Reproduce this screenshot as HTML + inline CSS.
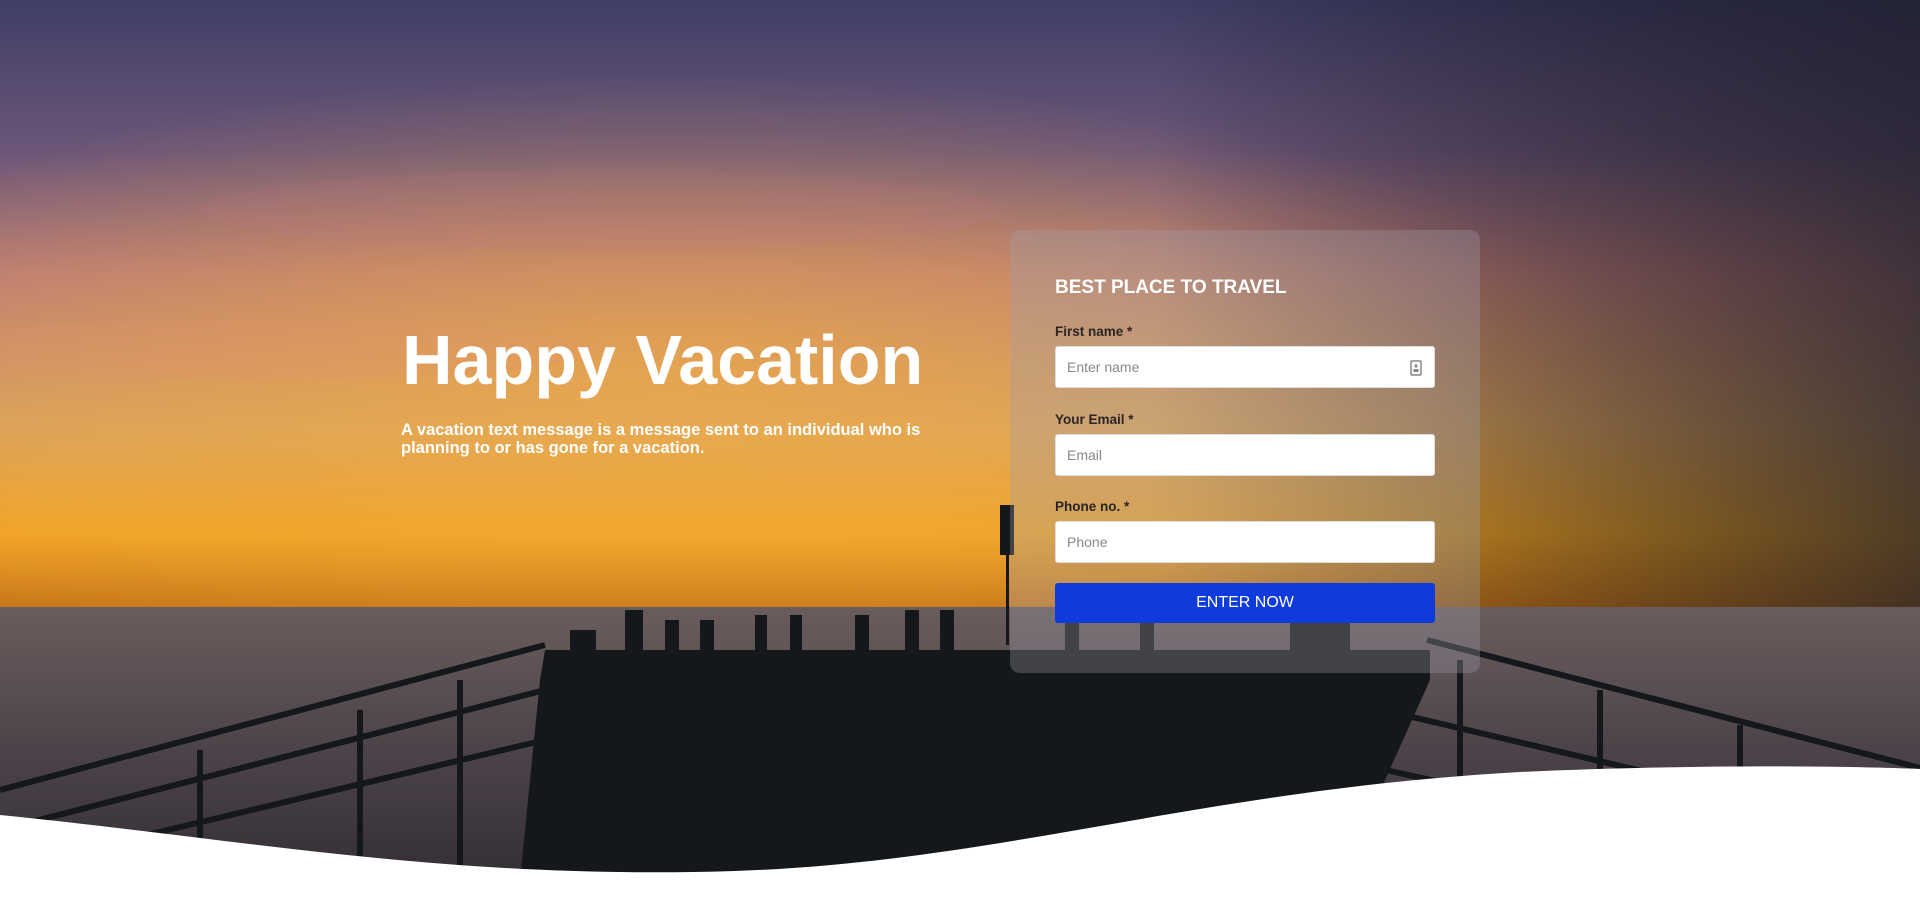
<!DOCTYPE html>
<html><head><meta charset="utf-8"><style>
*{margin:0;padding:0;box-sizing:border-box}
html,body{width:1920px;height:912px;overflow:hidden;background:#fff;font-family:"Liberation Sans",sans-serif}
.bg{position:absolute;left:0;top:0;width:1920px;height:912px}
.h1{position:absolute;left:402px;top:322px;color:#fff;font-size:70px;font-weight:bold;line-height:76px}
.sub{position:absolute;left:401px;top:421px;width:545px;color:#fff;font-size:16.5px;font-weight:bold;line-height:18px}
.card{position:absolute;left:1010px;top:230px;width:470px;height:443px;border-radius:10px;background:rgba(160,160,170,0.32)}
.title{position:absolute;left:1055px;top:277px;color:#fff;font-size:19px;font-weight:bold}
.lab{position:absolute;left:1055px;color:#2a2526;font-size:13.5px;font-weight:bold}
.inp{position:absolute;left:1055px;width:380px;height:42px;background:#fff;border:1px solid #ddd;border-radius:3px;color:#888;font-size:14px;padding:12px 0 0 11px}
.btn{position:absolute;left:1055px;top:583px;width:380px;height:40px;background:#0f3adc;border-radius:3px;color:#fff;font-size:16px;text-align:center;line-height:40px}
</style></head><body>
<svg class="bg" viewBox="0 0 1920 912" preserveAspectRatio="none">
<defs>
<linearGradient id="sky" x1="0" y1="0" x2="0" y2="1">
<stop offset="0" stop-color="#3f3e66"/><stop offset=".25" stop-color="#6b5678"/><stop offset=".45" stop-color="#b87a78"/><stop offset=".7" stop-color="#d8a060"/><stop offset=".88" stop-color="#f0a426"/><stop offset="1" stop-color="#c8781a"/>
</linearGradient>
<linearGradient id="dark" x1="0" y1="0" x2="1" y2="0">
<stop offset="0" stop-color="#000" stop-opacity="0"/><stop offset=".6" stop-color="#000" stop-opacity="0"/><stop offset="1" stop-color="#1a1a26" stop-opacity=".75"/>
</linearGradient>
<linearGradient id="sea" x1="0" y1="0" x2="0" y2="1">
<stop offset="0" stop-color="#6a5c5c"/><stop offset=".5" stop-color="#4a4248"/><stop offset="1" stop-color="#2e2a30"/>
</linearGradient>
<radialGradient id="glow" cx=".35" cy=".62" r=".5">
<stop offset="0" stop-color="#f5b040" stop-opacity=".6"/><stop offset="1" stop-color="#f5b040" stop-opacity="0"/>
</radialGradient>
</defs>
<rect width="1920" height="607" fill="url(#sky)"/>
<rect width="1920" height="607" fill="url(#glow)"/>
<rect width="1920" height="607" fill="url(#dark)"/>
<ellipse cx="250" cy="350" rx="350" ry="30" fill="#e89070" opacity=".2"/>
<ellipse cx="600" cy="210" rx="400" ry="40" fill="#c07888" opacity=".15"/>
<rect y="607" width="1920" height="305" fill="url(#sea)"/>
<g fill="#15181b">
<polygon points="545,650 1430,650 1430,680 1340,880 520,880 540,680"/>
<rect x="1000" y="505" width="14" height="50"/><rect x="1006" y="555" width="3" height="90"/>
<rect x="570" y="630" width="26" height="260"/><rect x="625" y="610" width="18" height="50"/>
<rect x="665" y="620" width="14" height="40"/><rect x="700" y="620" width="14" height="40"/>
<rect x="755" y="615" width="12" height="40"/><rect x="790" y="615" width="12" height="40"/>
<rect x="855" y="615" width="14" height="50"/><rect x="905" y="610" width="14" height="55"/>
<rect x="940" y="610" width="14" height="55"/><rect x="1065" y="620" width="14" height="45"/>
<rect x="1140" y="620" width="14" height="45"/><rect x="1290" y="620" width="60" height="60"/>
</g>
<g stroke="#15181b" stroke-width="6">
<line x1="0" y1="790" x2="545" y2="645"/><line x1="0" y1="830" x2="545" y2="690"/><line x1="0" y1="870" x2="545" y2="740"/>
<line x1="1427" y1="640" x2="1920" y2="768"/><line x1="1340" y1="700" x2="1850" y2="820"/><line x1="1340" y1="760" x2="1750" y2="850"/>
<line x1="200" y1="750" x2="200" y2="880"/><line x1="360" y1="710" x2="360" y2="880"/><line x1="460" y1="680" x2="460" y2="880"/>
<line x1="1460" y1="660" x2="1460" y2="850"/><line x1="1600" y1="690" x2="1600" y2="820"/><line x1="1740" y1="725" x2="1740" y2="800"/>
</g>
<path d="M0,815 C250,840 450,880 735,871 C1000,862 1200,790 1520,772 C1700,764 1850,766 1920,769 L1920,912 L0,912 Z" fill="#fff"/>
</svg>
<div class="h1">Happy Vacation</div>
<div class="sub">A vacation text message is a message sent to an individual who is planning to or has gone for a vacation.</div>
<div class="card"></div>
<div class="title">BEST PLACE TO TRAVEL</div>
<div class="lab" style="top:324px">First name *</div>
<div class="inp" style="top:346px">Enter name<svg style="position:absolute;right:12px;top:13px" width="12" height="16" viewBox="0 0 12 16"><rect x="1" y="1" width="10" height="14" rx="1" fill="none" stroke="#888" stroke-width="1.5"/><circle cx="6" cy="6" r="1.6" fill="#888"/><rect x="3.5" y="9" width="5" height="3" fill="#888"/></svg></div>
<div class="lab" style="top:412px">Your Email *</div>
<div class="inp" style="top:434px">Email</div>
<div class="lab" style="top:499px">Phone no. *</div>
<div class="inp" style="top:521px">Phone</div>
<div class="btn">ENTER NOW</div>
</body></html>
